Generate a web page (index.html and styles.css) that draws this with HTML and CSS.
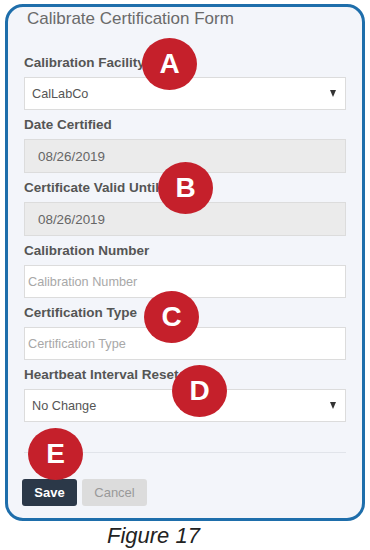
FILE: index.html
```html
<!DOCTYPE html>
<html lang="en">
<head>
    <meta charset="UTF-8">
    <meta name="viewport" content="width=device-width, initial-scale=1.0">
    <title>Calibrate Certification Form</title>
    <link rel="stylesheet" href="styles.css">
</head>
<body>
    <div class="frame">
        <h2 class="form-title">Calibrate Certification Form</h2>

        <form class="cal-form">
            <label for="facility">Calibration Facility</label>
            <div class="select-wrap">
                <select id="facility" class="field">
                    <option>CalLabCo</option>
                </select>
            </div>

            <label for="dateCertified">Date Certified</label>
            <input type="text" id="dateCertified" class="field date" value="08/26/2019" disabled>

            <label for="validUntil">Certificate Valid Until</label>
            <input type="text" id="validUntil" class="field date" value="08/26/2019" disabled>

            <label for="calNumber">Calibration Number</label>
            <input type="text" id="calNumber" class="field" placeholder="Calibration Number">

            <label for="certType">Certification Type</label>
            <input type="text" id="certType" class="field" placeholder="Certification Type">

            <label for="heartbeat">Heartbeat Interval Reset</label>
            <div class="select-wrap">
                <select id="heartbeat" class="field">
                    <option>No Change</option>
                </select>
            </div>

            <hr class="divider">

            <div class="actions">
                <button type="button" class="btn-save">Save</button>
                <button type="button" class="btn-cancel">Cancel</button>
            </div>
        </form>

        <!-- callout markers -->
        <span class="marker marker-a">A</span>
        <span class="marker marker-b">B</span>
        <span class="marker marker-c">C</span>
        <span class="marker marker-d">D</span>
        <span class="marker marker-e">E</span>
    </div>

    <p class="caption">Figure 17</p>
</body>
</html>
```

FILE: styles.css
```css
body {
    margin: 0;
    padding: 0;
    background-color: #fff;
    font-family: "Liberation Sans", Arial, sans-serif;
}
.frame {
    position: relative;
    box-sizing: border-box;
    width: 360px;
    height: 517px;
    margin: 4px 0 0 5px;
    padding: 0 16px;
    border: 3px solid #1e6eab;
    border-radius: 18px;
    background-color: #f3f5fa;
}
.form-title {
    margin: 2px 0 0 3px;
    font-size: 17px;
    font-weight: normal;
    line-height: 20px;
    color: #6a6a6a;
}
.cal-form {
    margin-top: 26px;
}
.cal-form label {
    display: block;
    margin: 7px 0 6px;
    font-size: 13.5px;
    font-weight: bold;
    line-height: 16px;
    color: #555;
}
.field {
    display: block;
    width: 100%;
    height: 33px;
    margin: 0;
    padding: 0 3px;
    box-sizing: border-box;
    border: 1px solid #dcdcdc;
    border-radius: 0;
    background-color: #fff;
    font-family: "Liberation Sans", Arial, sans-serif;
    font-size: 12.7px;
    color: #555;
}
.field::placeholder {
    color: #a8a8a8;
}
.field.date {
    padding-left: 13px;
    height: 34px;
    background-color: #ebebeb;
    font-size: 13.4px;
    color: #666;
}
.select-wrap {
    position: relative;
}
.select-wrap select {
    appearance: none;
    -webkit-appearance: none;
    padding-left: 7px;
}
.select-wrap::after {
    content: "";
    position: absolute;
    right: 10px;
    top: 13px;
    border-left: 3.5px solid transparent;
    border-right: 3.5px solid transparent;
    border-top: 7px solid #333;
    pointer-events: none;
}
.divider {
    margin: 30px 0 0;
    border: none;
    border-top: 1px solid #e1e4ea;
}
.actions {
    display: flex;
    gap: 5px;
    margin: 26px 0 0 -2px;
}
.actions button {
    height: 27px;
    border: none;
    border-radius: 3px;
    font-family: "Liberation Sans", Arial, sans-serif;
    font-size: 13px;
    cursor: pointer;
}
.btn-save {
    width: 55px;
    background-color: #2b3848;
    color: #fff;
    font-weight: bold;
}
.btn-cancel {
    width: 65px;
    background-color: #dcdcdc;
    color: #999;
}
.marker {
    position: absolute;
    width: 55px;
    height: 52px;
    border-radius: 50%;
    background-color: #c5202b;
    color: #fff;
    font-size: 28px;
    font-weight: bold;
    line-height: 52px;
    text-align: center;
}
.marker-a { left: 134px; top: 31px; }
.marker-b { left: 150px; top: 155px; }
.marker-c { left: 136px; top: 284px; }
.marker-d { left: 164px; top: 358px; }
.marker-e { left: 20px; top: 421px; }
.caption {
    margin: 2px 0 0 107px;
    font-size: 22px;
    font-style: italic;
    color: #222;
}
```
